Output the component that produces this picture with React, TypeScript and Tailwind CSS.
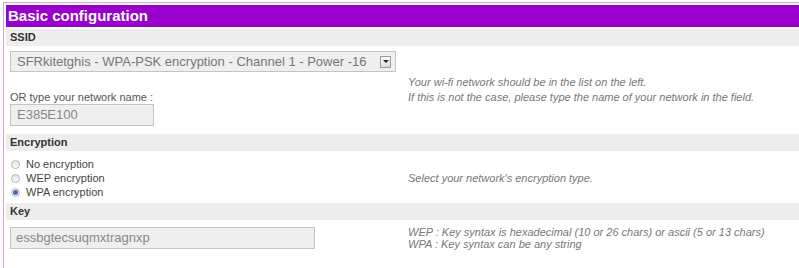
import type { ReactNode } from "react";

const FONT = "font-['Liberation_Sans',Arial,sans-serif]";

function SectionBar({ children }: { children: ReactNode }) {
  return (
    <div className="flex h-[17px] items-center bg-[#ededed] pl-[4px] text-[11px] font-bold text-[#333]">
      {children}
    </div>
  );
}

function Hint({ children }: { children: ReactNode }) {
  return <div className="text-[11px] italic text-[#777]">{children}</div>;
}

function Radio({ label, checked }: { label: string; checked?: boolean }) {
  return (
    <div className="flex h-[14px] items-center gap-[6px] text-[11px] text-[#444]">
      <span className="flex size-[9px] items-center justify-center rounded-full border border-[#b5b5b5] bg-gradient-to-b from-[#e4e4e4] to-[#fafafa]">
        {checked && <span className="size-[5px] rounded-full bg-[#3e6fb5]" />}
      </span>
      {label}
    </div>
  );
}

export default function App() {
  return (
    <div className={`${FONT} h-[268px] w-[799px] overflow-hidden bg-white pt-[2px] pl-[3px]`}>
      <div className="h-full border-t border-l border-[#cfa6dc] pt-[2px] pl-[2px]">
        <div className="flex h-[22px] items-center bg-[#9900cc] pl-[2px] text-[15px] font-bold text-white">
          Basic configuration
        </div>

        <div className="mt-[2px]">
          <SectionBar>SSID</SectionBar>
        </div>
        <div className="flex items-center pt-[5px] pl-[4px]">
          <div className="w-[398px]">
            <div className="flex h-[21px] w-[386px] items-center justify-between border border-[#c4c4c4] bg-[#efefef] pr-[4px] pl-[6px] text-[13px] text-[#777]">
              <span>SFRkitetghis - WPA-PSK encryption - Channel 1 - Power -16</span>
              <span className="flex h-[12px] w-[11px] items-center justify-center border border-[#9a9a9a] bg-gradient-to-b from-[#ffffff] to-[#dcdcdc]">
                <span className="h-0 w-0 border-x-[3px] border-t-[3px] border-x-transparent border-t-[#222]" />
              </span>
            </div>
            <div className="mt-[18px] h-[14px] text-[11px] leading-[14px] text-[#555]">OR type your network name :</div>
            <div className="flex h-[22px] w-[144px] items-center border border-[#c4c4c4] bg-[#efefef] pl-[6px] text-[13px] text-[#888]">
              E385E100
            </div>
          </div>
          <div className="pt-[3px] leading-[15px]">
            <Hint>Your wi-fi network should be in the list on the left.</Hint>
            <Hint>If this is not the case, please type the name of your network in the field.</Hint>
          </div>
        </div>

        <div className="mt-[8px]">
          <SectionBar>Encryption</SectionBar>
        </div>
        <div className="flex items-center pt-[6px] pl-[5px]">
          <div className="w-[397px]">
            <Radio label="No encryption" />
            <Radio label="WEP encryption" />
            <Radio label="WPA encryption" checked />
          </div>
          <Hint>Select your network's encryption type.</Hint>
        </div>

        <div className="mt-[4px]">
          <SectionBar>Key</SectionBar>
        </div>
        <div className="flex items-center pt-[6px] pl-[4px]">
          <div className="w-[398px]">
            <div className="flex h-[22px] w-[305px] items-center border border-[#c4c4c4] bg-[#efefef] pl-[5px] text-[13px] text-[#888]">
              essbgtecsuqmxtragnxp
            </div>
          </div>
          <div className="leading-[12px]">
            <Hint>WEP : Key syntax is hexadecimal (10 or 26 chars) or ascii (5 or 13 chars)</Hint>
            <Hint>WPA : Key syntax can be any string</Hint>
          </div>
        </div>
      </div>
    </div>
  );
}
